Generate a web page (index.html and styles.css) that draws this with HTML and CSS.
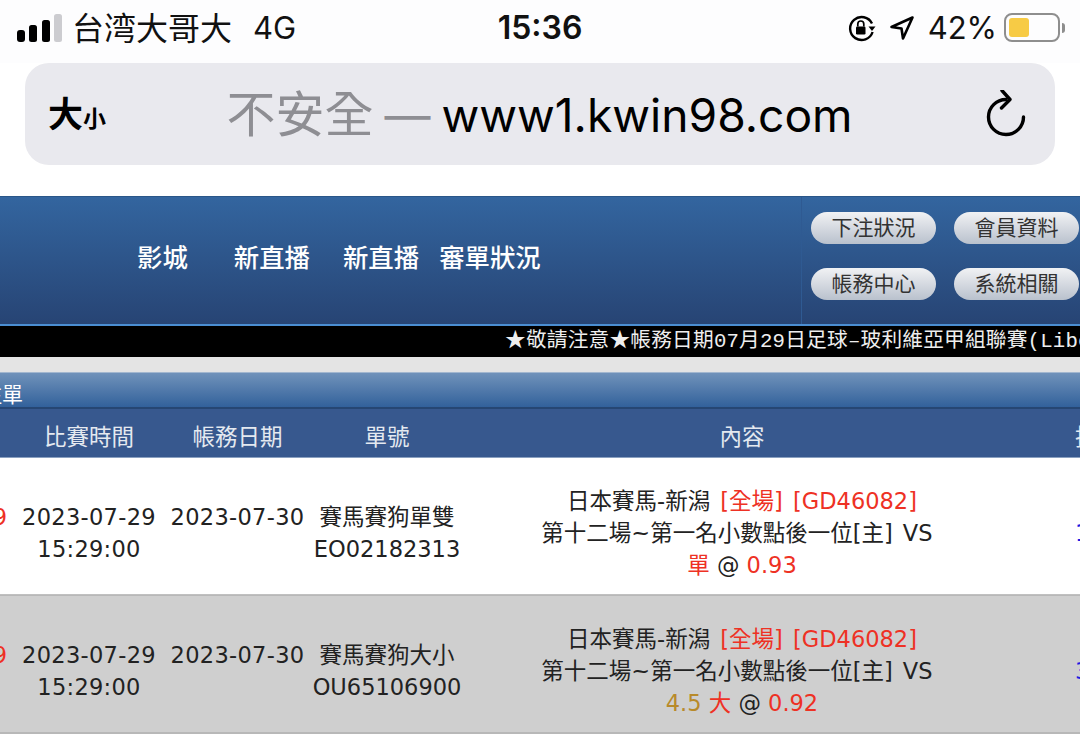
FILE: index.html
```html
<!DOCTYPE html>
<html lang="zh-Hant">
  <head>
    <meta charset="UTF-8" />
    <meta name="viewport" content="width=device-width, initial-scale=1.0" />
    <title>www1.kwin98.com</title>
    <link rel="stylesheet" href="styles.css">
  </head>
  <body>
    <!-- Phone status bar -->
    <div class="status">
      <div class="status-left">
        <svg class="signal" width="46" height="28" viewBox="0 0 46 28">
          <rect x="0" y="16" width="8" height="12" rx="3" fill="#000"/>
          <rect x="12" y="11" width="8" height="17" rx="2.5" fill="#000"/>
          <rect x="25" y="6" width="8" height="22" rx="2.5" fill="#000"/>
          <rect x="37" y="0" width="8" height="28" rx="2.5" fill="#ccccd0"/>
        </svg>
        <span class="carrier">台湾大哥大</span>
        <span class="net">4G</span>
      </div>
      <div class="clock">15:36</div>
      <div class="status-right">
        <svg width="30" height="28" viewBox="0 0 30 28" fill="none">
          <path d="M25 9.5A11.5 11.5 0 1 0 25.6 18" stroke="#000" stroke-width="2.4"/>
          <path d="M21.5 12.5h7l-3.5 4.5z" fill="#000"/>
          <rect x="9" y="12.5" width="9.5" height="8" rx="1.2" fill="#000"/>
          <path d="M10.8 12.5V10a3 3 0 0 1 6 0v2.5" stroke="#000" stroke-width="1.7"/>
        </svg>
        <svg class="arrow" width="26" height="26" viewBox="0 0 26 26" fill="none">
          <path d="M23.5 2.5 2.5 12l10 1.5 1.5 10z" stroke="#000" stroke-width="2.6" stroke-linejoin="round"/>
        </svg>
        <span class="percent">42%</span>
        <div class="battery"><div class="battery-fill"></div></div>
        <div class="battery-cap"></div>
      </div>
    </div>

    <!-- Address bar -->
    <div class="urlbar">
      <div class="text-size">大<small>小</small></div>
      <div class="address"><span class="insecure">不安全 <span class="dash">—</span> </span>www1.kwin98.com</div>
      <svg class="reload" width="42" height="48" viewBox="0 0 42 48" fill="none">
        <path d="M21 9.5A17.5 17.5 0 1 0 38.5 27" stroke="#000" stroke-width="3.4" stroke-linecap="round"/>
        <path d="M17 0.5 25 9.5 16.5 18" stroke="#000" stroke-width="3.4" stroke-linecap="round" stroke-linejoin="round"/>
      </svg>
    </div>

    <!-- Site header -->
    <header class="site-head">
      <nav class="main-nav">
        <a class="nav-city">影城</a>
        <a class="nav-live">新直播</a>
        <a class="nav-live2">新直播</a>
        <a class="nav-review">審單狀況</a>
      </nav>
      <div class="quick">
        <a class="pill">下注狀況</a>
        <a class="pill">會員資料</a>
        <a class="pill">帳務中心</a>
        <a class="pill">系統相關</a>
      </div>
    </header>
    <div class="ticker">★敬請注意★帳務日期07月29日足球–玻利維亞甲組聯賽(Liberation)</div>
    <div class="strip"></div>

    <!-- Bets table -->
    <h2 class="title">注單</h2>
    <div class="row row-head">
      <div></div>
      <div>比賽時間</div>
      <div>帳務日期</div>
      <div>單號</div>
      <div>內容</div>
      <div class="last">投注</div>
    </div>
    <div class="row">
      <div class="cell-side red">29</div>
      <div class="cell-side date">2023-07-29<br>15:29:00</div>
      <div class="cell-side date">2023-07-30</div>
      <div class="cell-side">賽馬賽狗單雙<br>EO02182313</div>
      <div class="content">日本賽馬-新潟 <span class="red">[全場] [GD46082]</span><br>第十二場~第一名小數點後一位[主] VS&nbsp;<br><span class="pick"><span class="red">單</span> @ <span class="red">0.93</span></span></div>
      <div class="last blue">100</div>
    </div>
    <div class="row row-alt">
      <div class="cell-side red">29</div>
      <div class="cell-side date">2023-07-29<br>15:29:00</div>
      <div class="cell-side date">2023-07-30</div>
      <div class="cell-side">賽馬賽狗大小<br>OU65106900</div>
      <div class="content">日本賽馬-新潟 <span class="red">[全場] [GD46082]</span><br>第十二場~第一名小數點後一位[主] VS&nbsp;<br><span class="pick"><span class="gold">4.5</span> <span class="red">大</span> @ <span class="red">0.92</span></span></div>
      <div class="last blue">300</div>
    </div>
  </body>
</html>
```

FILE: styles.css
```css
* { box-sizing: border-box; }
html, body { height: 100%; }
body {
  margin: 0;
  background: #fff;
  color: #222;
  font-family: "DejaVu Sans", "Noto Sans CJK TC", sans-serif;
  overflow: hidden;
}

/* status bar */
.status {
  height: 63px;
  background: #fdfdfe;
  display: grid;
  grid-template-columns: 1fr auto 1fr;
  align-items: center;
  padding: 0 17px 8px;
  color: #111;
  font-family: Inter, "Noto Sans CJK TC", sans-serif;
}
.status-left { display: flex; align-items: center; }
.signal { margin-right: 9px; }
.carrier { font-size: 32px; line-height: 40px; margin-top: -3px; font-family: "Noto Sans CJK TC", sans-serif; }
.net { font-size: 31px; margin-left: 21px; }
.clock { font-size: 32px; font-weight: 600; }
.status-right { display: flex; align-items: center; justify-content: flex-end; }
.arrow { margin-left: 12px; }
.percent { font-size: 31px; margin-left: 13px; margin-right: 7px; }
.battery {
  width: 56px;
  height: 29px;
  border: 2px solid #8e8e8e;
  border-radius: 8px;
  padding: 3px;
}
.battery-fill { width: 20px; height: 100%; background: #f7cb45; border-radius: 3px; }
.battery-cap { width: 3px; height: 10px; margin-left: 2px; margin-right: -2px; background: #8e8e8e; border-radius: 0 3px 3px 0; }

/* address bar */
.urlbar {
  height: 102px;
  margin: 0 25px;
  background: #e9e9ee;
  border-radius: 24px;
  display: flex;
  align-items: center;
  padding: 0 28px 0 23px;
  color: #000;
}
.text-size { width: 60px; margin-top: -6px; font-family: "Noto Sans CJK TC", sans-serif; font-size: 35px; font-weight: 700; }
.text-size small { font-size: 23px; }
.address {
  flex: 1;
  padding: 0 14px 8px 0;
  text-align: center;
  font-family: Inter, "Noto Sans CJK TC", sans-serif;
  font-size: 46.2px;
  white-space: nowrap;
}
.insecure { color: #8e8e93; font-family: "Noto Sans CJK TC", sans-serif; font-size: 49px; }
.dash { font-family: Inter, sans-serif; font-size: 46px; }

/* site header */
.site-head {
  height: 128px;
  margin-top: 31px;
  display: flex;
  background: linear-gradient(#33659f, #274474);
  border-top: 1px solid #2a5688;
}
.main-nav {
  width: 801px;
  display: flex;
  align-items: center;
  color: #fff;
  font-family: "Noto Sans CJK TC", sans-serif;
  font-size: 25.4px;
  font-weight: 500;
  padding: 0 0 10px 137px;
  white-space: nowrap;
}
.nav-live { margin-left: 46px; }
.nav-live2 { margin-left: 33px; }
.nav-review { margin-left: 20px; }
.quick {
  flex: 1;
  border-left: 1px solid #2f5a92;
  padding: 15px 0 0 9px;
  display: grid;
  grid-template-columns: 125px 125px;
  grid-auto-rows: 32px;
  column-gap: 18px;
  row-gap: 24px;
}
.pill {
  border-radius: 16px;
  background: linear-gradient(#f1f2f4, #b9c1cd);
  color: #333;
  font-family: "Noto Sans CJK TC", sans-serif;
  font-size: 21px;
  line-height: 28px;
  text-align: center;
}

/* ticker */
.ticker {
  height: 33px;
  border-top: 2px solid #4b8ed2;
  background: #000;
  color: #eee;
  font-family: "Liberation Mono", "Noto Sans CJK TC", monospace;
  font-size: 20.7px;
  letter-spacing: 0.2px;
  line-height: 31px;
  padding-left: 505px;
  white-space: nowrap;
  overflow: hidden;
}
.strip { height: 15px; background: #e4e4e4; }

/* table */
.title {
  margin: 0;
  height: 37px;
  padding-top: 3px;
  background: linear-gradient(#7092ba, #32619b);
  border-top: 1px solid #a3b7cf;
  border-bottom: 2px solid #264673;
  color: #fff;
  font-size: 21px;
  font-weight: 400;
  line-height: 38px;
  text-indent: -19px;
  overflow: hidden;
}
.row {
  display: grid;
  grid-template-columns: 14px 150px 147px 152px 558px 160px;
  align-items: start;
  text-align: center;
  height: 137px;
  padding-top: 27px;
  font-size: 22.5px;
  line-height: 32px;
  border-bottom: 1px solid #c0c0c0;
  white-space: nowrap;
}
.row-head {
  height: 49px;
  padding-top: 12px;
  background: #37588e;
  color: #e4e9f0;
  border-bottom: 1px solid #8aa0c0;
}
.row-alt { height: 139px; background: #cfcfcf; border-top: 1px solid #b8b8b8; border-bottom: 2px solid #b8b8b8; }
.cell-side { margin-top: 16px; }
.row > .cell-side:first-child { direction: rtl; padding-right: 7px; overflow: hidden; }
.date { letter-spacing: 0.3px; }
.content { word-spacing: 3px; }
.pick { word-spacing: 0; }
.last { text-align: left; padding-left: 54px; }
.blue { margin-top: 32px; color: #1a1ae0; }
.red { color: #ee3124; }
.gold { color: #b88a2a; }
```
